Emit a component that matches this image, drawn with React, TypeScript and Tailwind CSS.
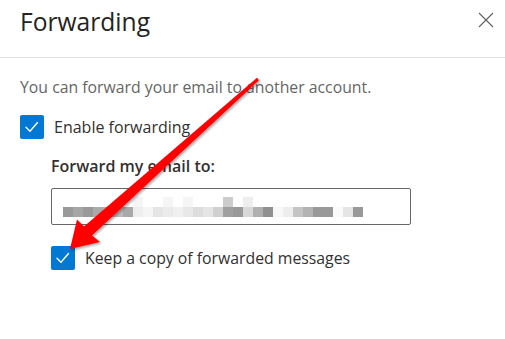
import React from 'react';

const font = { fontFamily: '"Open Sans", "Noto Sans", sans-serif' };

// blurred address, one class per 10px block
const midRow = [
  'bg-[#999]', 'bg-[#a5a5a5]', 'bg-[#999]', 'bg-[#aaa]', 'bg-[#b0b0b0]', 'bg-[#bbb]', 'bg-[#a9a9a9]',
  'bg-[#eee]', 'bg-[#f5f5f5]', 'bg-[#e5e5e5]', 'bg-[#ebebeb]', 'bg-[#f0f0f0]', 'bg-[#e8e8e8]', 'bg-[#ddd]',
  'bg-[#e5e5e5]', 'bg-[#d0d0d0]', 'bg-[#a0a0a0]', 'bg-[#999]', 'bg-[#d8d8d8]', 'bg-[#b0b0b0]', 'bg-[#909090]',
  'bg-[#f8f8f8]', 'bg-[#eee]', 'bg-[#c5c5c5]', 'bg-[#b3b3b3]', 'bg-[#999]', 'bg-[#999]', 'bg-[#fafafa]',
  'bg-[#e5e5e5]', 'bg-[#999]',
];

const topRow = midRow.map((_, i) =>
  i === 16 ? 'bg-[#ccc]' : i === 18 ? 'bg-[#eee]' : i === 7 || i === 10 || i === 12 ? 'bg-[#f5f5f5]' : 'bg-transparent'
);

const Checkbox = () => (
  <span className="w-6 h-6 rounded-[2px] bg-[#0078d4] flex items-center justify-center shrink-0">
    <svg width="24" height="24" viewBox="0 0 24 24" fill="none">
      <path d="M6 12.2 L10 16.2 L17.5 7.5" stroke="white" strokeWidth="1.4" strokeLinecap="round" strokeLinejoin="round" />
    </svg>
  </span>
);

const App = () => {
  return (
    <div className="relative w-[505px] h-[339px] bg-white overflow-hidden" style={font}>
      <div className="h-[58px] border-b border-[#e1e1e1] flex justify-between px-5 pt-[6px]">
        <h1 className="text-[24.6px] leading-8 text-[#252423]">Forwarding</h1>
        <svg width="16" height="16" viewBox="0 0 16 16" className="mt-[6px] -mr-[9px]">
          <path d="M1 1 L15 15 M15 1 L1 15" stroke="#605e5c" strokeWidth="1.1" />
        </svg>
      </div>

      <div className="px-5 pt-[17px]">
        <p className="text-[15.8px] leading-6 text-[#666]">You can forward your email to another account.</p>

        <label className="mt-[15px] flex items-center gap-[10px]">
          <Checkbox />
          <span className="text-[16px] leading-6 text-[#323130] pt-[1px]">Enable forwarding</span>
        </label>

        <div className="pl-[31px] pt-[15px]">
          <div className="text-[16px] leading-6 font-semibold text-[#323130]">Forward my email to:</div>
          <div className="mt-[10px] w-[360px] h-[37px] border border-[#666] rounded-[2px] pl-[11px] pt-[8px]">
            <div className="flex">
              {topRow.map((c, i) => (
                <span key={i} className={`w-[10px] h-[10px] ${c}`} />
              ))}
            </div>
            <div className="flex">
              {midRow.map((c, i) => (
                <span key={i} className={`w-[10px] h-[10px] ${c}`} />
              ))}
            </div>
          </div>

          <label className="mt-[20px] flex items-center gap-[10px]">
            <Checkbox />
            <span className="text-[15.8px] leading-6 text-[#323130] pt-[1px]">Keep a copy of forwarded messages</span>
          </label>
        </div>
      </div>

      {/* red annotation arrow */}
      <svg className="absolute inset-0 pointer-events-none" width="505" height="339" viewBox="0 0 505 339">
        <defs>
          <filter id="sh" x="-10%" y="-10%" width="130%" height="130%">
            <feDropShadow dx="1.5" dy="1.5" stdDeviation="1" floodColor="#000" floodOpacity="0.35" />
          </filter>
        </defs>
        <polygon
          points="257,77.8 84,226.5 77,219.5 70,249 100,242 92,235.5 259,80.2"
          fill="#f00"
          filter="url(#sh)"
        />
      </svg>
    </div>
  );
};

export default App;
